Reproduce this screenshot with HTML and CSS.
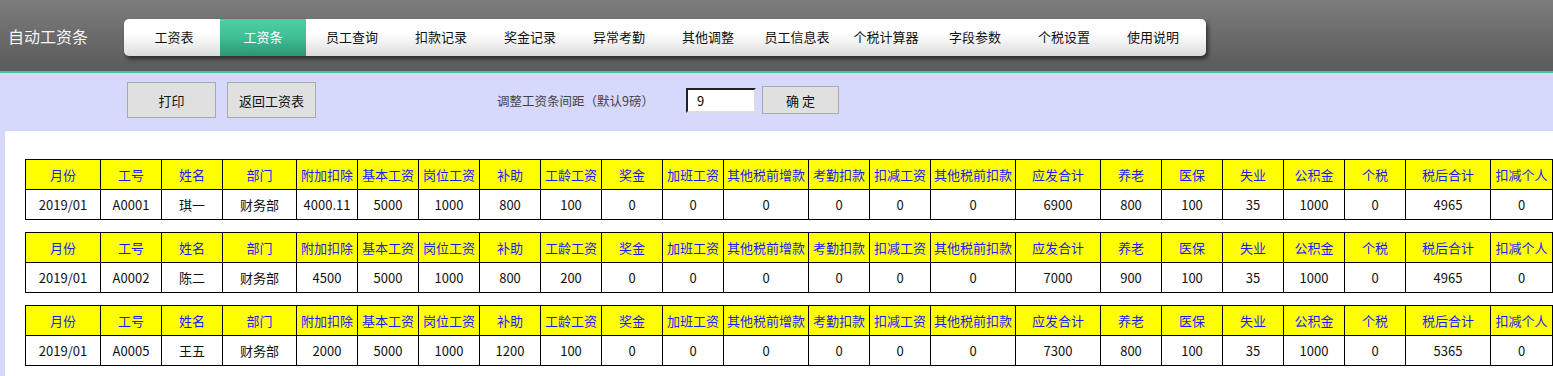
FILE: index.html
```html
<!DOCTYPE html>
<html lang="zh-CN">
<head>
<meta charset="utf-8">
<title>自动工资条</title>
<link rel="stylesheet" href="styles.css">
</head>
<body>
<header class="topbar">
  <div class="brand">自动工资条</div>
  <nav class="nav">
    <a class="nav-item">工资表</a>
    <a class="nav-item active">工资条</a>
    <a class="nav-item">员工查询</a>
    <a class="nav-item">扣款记录</a>
    <a class="nav-item">奖金记录</a>
    <a class="nav-item">异常考勤</a>
    <a class="nav-item">其他调整</a>
    <a class="nav-item">员工信息表</a>
    <a class="nav-item">个税计算器</a>
    <a class="nav-item">字段参数</a>
    <a class="nav-item">个税设置</a>
    <a class="nav-item">使用说明</a>
  </nav>
</header>
<section class="toolbar">
  <button class="btn">打印</button>
  <button class="btn btn-back">返回工资表</button>
  <span class="label">调整工资条间距（默认9磅）</span>
  <input class="gap-input" type="text" value="9">
  <button class="btn-ok">确 定</button>
</section>
<main class="panel">
  <div class="slips" id="slips"></div>
</main>
<script src="app.js"></script>
</body>
</html>
```
FILE: styles.css
```css
* { box-sizing: border-box; }
html, body { margin: 0; padding: 0; }
body {
  font-family: "Noto Sans CJK SC", "Noto Sans", sans-serif;
  font-size: 13px;
  color: #000;
  background: #d6d8fc;
  width: 1553px;
  height: 376px;
  overflow: hidden;
}
.topbar {
  height: 73px;
  background: linear-gradient(to bottom, #7c7c7c 0%, #5a5a5a 100%);
  border-bottom: 2px solid #3cc89a;
  display: flex;
  align-items: flex-start;
}
.brand {
  color: #f4f4f4;
  font-size: 16px;
  line-height: 20px;
  margin: 26px 0 0 8px;
  width: 116px;
}
.nav {
  margin-top: 19px;
  height: 37px;
  display: flex;
  gap: 3px;
  padding: 0 10px 0 7px;
  background: linear-gradient(to bottom, #ffffff 0%, #ffffff 40%, #dcdcdc 100%);
  border-radius: 5px;
  box-shadow: 2px 3px 4px rgba(0, 0, 0, 0.55);
}
.nav-item {
  width: 86px;
  height: 37px;
  line-height: 36px;
  text-align: center;
  color: #111;
  font-size: 13px;
  white-space: nowrap;
  cursor: pointer;
}
.nav-item.active {
  background: linear-gradient(to bottom, #4fd0a4 0%, #3fbe94 50%, #2d9674 100%);
  color: #fff;
}
.toolbar {
  height: 58px;
  display: flex;
  align-items: center;
  padding-left: 127px;
}
.btn {
  width: 89px;
  height: 36px;
  background: #e0e0e0;
  border: 1px solid #aaa;
  font-family: inherit;
  font-size: 13px;
  color: #111;
  padding: 0;
  margin-top: -4px;
}
.btn-back { margin-left: 11px; }
.label {
  margin-left: 181px;
  color: #444;
  font-size: 12.5px;
  margin-top: -4px;
}
.gap-input {
  margin-left: 32px;
  width: 70px;
  height: 25px;
  border: 2px inset #888;
  border-color: #777 #ddd #ddd #777;
  background: #fff;
  font-family: inherit;
  font-size: 13px;
  padding: 0 0 0 9px;
  margin-top: -4px;
}
.btn-ok {
  margin-left: 6px;
  width: 77px;
  height: 28px;
  background: #e0e0e0;
  border: 1px solid #aaa;
  font-family: inherit;
  font-size: 13px;
  color: #111;
  padding: 0;
  margin-top: -4px;
}
.panel {
  margin-left: 5px;
  background: #fff;
  height: 245px;
  padding: 28px 0 0 20px;
}
.slips {
  display: flex;
  flex-direction: column;
  gap: 12px;
}
.slip {
  border-collapse: collapse;
  table-layout: fixed;
  width: 1528px;
}
.slip th, .slip td {
  border: 1px solid #000;
  height: 30px;
  padding: 0;
  text-align: center;
  font-size: 13px;
  white-space: nowrap;
  overflow: hidden;
}
.slip th {
  background: #ffff00;
  color: #1a1aff;
  font-weight: normal;
}
.slip td {
  background: #fff;
  color: #111;
}
```
FILE: app.js
```js
var cols = [
  ["月份", 75], ["工号", 61], ["姓名", 61], ["部门", 74], ["附加扣除", 61],
  ["基本工资", 61], ["岗位工资", 61], ["补助", 61], ["工龄工资", 61], ["奖金", 61],
  ["加班工资", 61], ["其他税前增款", 85], ["考勤扣款", 61], ["扣减工资", 61],
  ["其他税前扣款", 85], ["应发合计", 85], ["养老", 61], ["医保", 61], ["失业", 61],
  ["公积金", 61], ["个税", 61], ["税后合计", 85], ["扣减个人", 62]
];
var rows = [
  ["2019/01","A0001","琪一","财务部","4000.11","5000","1000","800","100","0","0","0","0","0","0","6900","800","100","35","1000","0","4965","0"],
  ["2019/01","A0002","陈二","财务部","4500","5000","1000","800","200","0","0","0","0","0","0","7000","900","100","35","1000","0","4965","0"],
  ["2019/01","A0005","王五","财务部","2000","5000","1000","1200","100","0","0","0","0","0","0","7300","800","100","35","1000","0","5365","0"]
];
var host = document.getElementById("slips");
rows.forEach(function (r) {
  var t = document.createElement("table");
  t.className = "slip";
  var cg = document.createElement("colgroup");
  cols.forEach(function (c) {
    var col = document.createElement("col");
    col.style.width = c[1] + "px";
    cg.appendChild(col);
  });
  t.appendChild(cg);
  var hr = document.createElement("tr");
  cols.forEach(function (c) {
    var th = document.createElement("th");
    th.textContent = c[0];
    hr.appendChild(th);
  });
  var dr = document.createElement("tr");
  r.forEach(function (v) {
    var td = document.createElement("td");
    td.textContent = v;
    dr.appendChild(td);
  });
  t.appendChild(hr);
  t.appendChild(dr);
  host.appendChild(t);
});
```
